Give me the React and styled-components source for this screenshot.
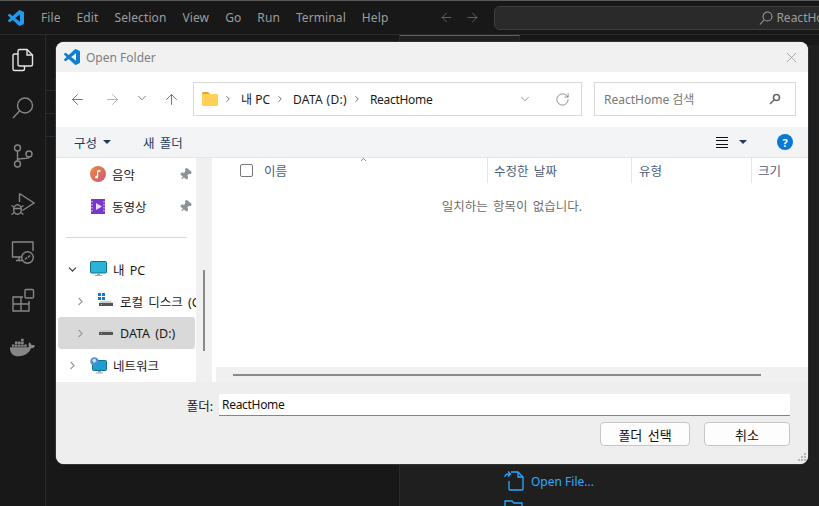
import React from 'react'
import styled, { createGlobalStyle } from 'styled-components'
import { FaDocker } from 'react-icons/fa'
import { ArrowLeft, ArrowRight, ArrowUp, ChevronDown, ChevronRight, RotateCw, X, Pin } from 'lucide-react'

const font = `"Noto Sans", "Noto Sans CJK KR", sans-serif`

const Global = createGlobalStyle`
  html, body { margin: 0; padding: 0; background: #1f1f1f; overflow: hidden; }
  * { box-sizing: border-box; }
  #root { width: 819px; height: 506px; }
  svg { flex: none; }
`

const Page = styled.div`
  position: relative;
  width: 819px;
  height: 506px;
  display: flex;
  flex-direction: column;
  overflow: hidden;
  font-family: ${font};
  background: #1f1f1f;
`

/* vscode behind */
const TitleBar = styled.div`
  height: 35px;
  flex: none;
  display: flex;
  align-items: center;
  background: #181818;
  border-top: 1px solid #5a5a5a;
  border-bottom: 1px solid #2b2b2b;
  color: #9d9d9d;
  font-size: 12px;
  padding-left: 8px;
`
const Menu = styled.div`
  display: flex;
  gap: 16px;
  margin-left: 17px;
  letter-spacing: 0.1px;
`
const NavArrows = styled.div`
  display: flex;
  gap: 11px;
  margin-left: 51px;
  color: #7a7a7a;
`
const CommandBox = styled.div`
  width: 340px;
  height: 24px;
  margin-left: 14px;
  flex: none;
  display: flex;
  align-items: center;
  gap: 2px;
  padding-left: 263px;
  background: #2a2a2a;
  border: 1px solid #3f3f3f;
  border-radius: 6px;
  white-space: nowrap;
  overflow: hidden;
`
const Body = styled.div`
  flex: 1;
  display: flex;
  min-height: 0;
`
const ActivityBar = styled.div`
  width: 46px;
  flex: none;
  display: flex;
  flex-direction: column;
  align-items: center;
  gap: 22px;
  padding-top: 12px;
  background: #181818;
  border-right: 1px solid #2b2b2b;
  color: #868686;
`
const SideBar = styled.div`
  width: 354px;
  flex: none;
  display: flex;
  flex-direction: column;
  padding-top: 33px;
  background: #181818;
  border-right: 1px solid #2b2b2b;
`
const SideHead = styled.div`
  height: 23px;
  padding: 4px 0 0 5px;
  color: #bbb;
  border-bottom: 1px solid #2b2b2b;
`
const Editor = styled.div`
  flex: 1;
  position: relative;
  display: flex;
  flex-direction: column;
`
const EditorTab = styled.div`
  width: 120px;
  height: 10px;
  background: #1f1f1f;
  border-top: 1px solid #0078d4;
  border-right: 1px solid #2b2b2b;
`
const EditorTabs = styled.div`
  height: 10px;
  background: #181818;
`
const StartLinks = styled.div`
  flex: 1;
  display: flex;
  flex-direction: column;
  justify-content: flex-end;
  gap: 3px;
  padding-left: 103px;
  margin-bottom: -14px;
  color: #2aaaff;
  font-size: 12px;
`
const StartLink = styled.div`
  display: flex;
  align-items: center;
  gap: 6px;
  height: 24px;
`

/* file dialog */
const Dialog = styled.div`
  position: absolute;
  left: 56px;
  top: 42px;
  width: 752px;
  height: 422px;
  display: flex;
  flex-direction: column;
  background: #eee;
  border-radius: 8px;
  overflow: hidden;
  color: #1a1a1a;
  font-size: 12.5px;
  word-spacing: 2px;
  box-shadow: 0 0 0 1px #333;
`
const DialogTitle = styled.div`
  height: 30px;
  flex: none;
  display: flex;
  align-items: center;
  gap: 6px;
  padding: 0 8px 0 8px;
  background: #f1f1f1;
  color: #7f7f7f;
  font-size: 12px;
  word-spacing: 0;
`
const CloseBtn = styled.div`
  margin-left: auto;
  display: flex;
  color: #8c8c8c;
`
const NavRow = styled.div`
  height: 55px;
  flex: none;
  display: flex;
  align-items: center;
  background: #fff;
  padding-bottom: 1px;
`
const NavBtn = styled.div`
  width: ${p => p.$w}px;
  display: flex;
  justify-content: center;
  color: ${p => (p.$off ? '#a8a8a8' : '#5f5f5f')};
`
const NavIcons = styled.div`
  display: flex;
  width: 137px;
  padding-left: 4px;
`
const AddressBox = styled.div`
  width: 389px;
  height: 34px;
  flex: none;
  display: flex;
  align-items: center;
  padding: 0 11px 0 8px;
  border: 1px solid #d9d9d9;
  color: #1a1a1a;
  font-size: 12px;
  word-spacing: 0;
`
const Crumb = styled.span`
  letter-spacing: ${p => p.$track || 0}px;
  white-space: nowrap;
`
const Sep = styled(ChevronRight)`
  color: #555;
  margin: 0 8px 0 5px;
  flex: none;
`
const AddrTools = styled.div`
  margin-left: auto;
  display: flex;
  align-items: center;
  gap: 23px;
  color: #6c6c6c;
`
const SearchBox = styled.div`
  width: 202px;
  height: 34px;
  margin-left: 12px;
  flex: none;
  display: flex;
  align-items: center;
  justify-content: space-between;
  padding: 0 14px 0 9px;
  border: 1px solid #d9d9d9;
  color: #777;
  font-size: 12px;
  word-spacing: 0;
`
const Toolbar = styled.div`
  height: 31px;
  flex: none;
  display: flex;
  align-items: center;
  padding: 0 15px 0 18px;
  background: #f3f4f6;
  border-bottom: 1px solid #e6e6e6;
  color: #1f3a5c;
`
const Caret = styled.span`
  display: inline-block;
  width: 0;
  height: 0;
  margin-left: ${p => p.$gap}px;
  border-left: 4px solid transparent;
  border-right: 4px solid transparent;
  border-top: 4px solid #1f3a5c;
`
const NewFolder = styled.span`
  margin-left: 32px;
`
const ToolRight = styled.div`
  margin-left: auto;
  display: flex;
  align-items: center;
`
const Lines = styled.div`
  width: 12px;
  height: 11px;
  border-top: 1px solid #111;
  border-bottom: 1px solid #111;
  position: relative;
  &::before, &::after {
    content: '';
    position: absolute;
    left: 0;
    right: 0;
    height: 1px;
    background: #111;
  }
  &::before { top: 2px; }
  &::after { top: 6px; }
`
const Help = styled.div`
  width: 16px;
  height: 16px;
  margin-left: 30px;
  border-radius: 50%;
  background: #0a78d6;
  color: #fff;
  font-size: 11px;
  font-weight: 700;
  display: flex;
  align-items: center;
  justify-content: center;
`
const Browser = styled.div`
  height: 224px;
  flex: none;
  display: flex;
  background: #fff;
`
const NavPane = styled.div`
  width: 140px;
  flex: none;
  overflow: hidden;
`
const Track = styled.div`
  width: 16px;
  flex: none;
  background: #f0f0f0;
  position: relative;
  margin-right: 4px;
`
const Thumb = styled.div`
  position: absolute;
  left: 7px;
  top: 112px;
  width: 2px;
  height: 81px;
  background: #8a8a8a;
`
const TreeRow = styled.div`
  height: 32px;
  margin: 0 ${p => (p.$sel ? 1 : 0)}px 0 ${p => (p.$sel ? 2 : 0)}px;
  display: flex;
  align-items: center;
  padding-left: ${p => p.$indent - (p.$sel ? 2 : 0)}px;
  background: ${p => (p.$sel ? '#d9d9d9' : 'transparent')};
  border-radius: 3px;
  white-space: nowrap;
  color: #1a1a1a;
`
const TreeChev = styled.div`
  width: 16px;
  margin-right: 10px;
  flex: none;
  display: flex;
  justify-content: center;
  color: ${p => (p.$open ? '#333' : '#999')};
`
const PinSlot = styled.div`
  position: absolute;
  left: 123px;
  color: #8d9299;
  display: flex;
  transform: rotate(40deg);
`
const QuickRow = styled(TreeRow)`
  position: relative;
`
const Label = styled.span`
  margin-left: 6px;
`
const Divider = styled.div`
  height: 1px;
  margin: 15px 9px 15px 10px;
  background: #d8d8d8;
`
const FilePane = styled.div`
  flex: 1;
  min-width: 0;
  display: flex;
  flex-direction: column;
`
const ColHead = styled.div`
  height: 25px;
  flex: none;
  display: flex;
  color: #4c607a;
  position: relative;
`
const Col = styled.div`
  width: ${p => p.$w}px;
  flex: none;
  display: flex;
  align-items: center;
  gap: 11px;
  padding: 0 0 1px ${p => p.$pad}px;
  border-right: ${p => (p.$line ? '1px solid #e5e5e5' : 'none')};
`
const Check = styled.div`
  width: 13px;
  height: 13px;
  border: 1px solid #767676;
  border-radius: 2px;
  background: #fff;
`
const SortMark = styled.div`
  position: absolute;
  left: 143px;
  top: -3px;
  color: #555;
  display: flex;
  transform: rotate(180deg);
`
const Empty = styled.div`
  flex: 1;
  text-align: center;
  padding-top: 13px;
  color: #6d6d6d;
`
const HScroll = styled.div`
  height: 15px;
  flex: none;
  background: #f0f0f0;
  display: flex;
  align-items: center;
  padding-left: 17px;
`
const HThumb = styled.div`
  width: 528px;
  height: 2px;
  background: #8a8a8a;
`
const Footer = styled.div`
  flex: 1;
  position: relative;
  display: flex;
  flex-direction: column;
  padding: 12px 18px 0 0;
  background: #eee;
`
const NameRow = styled.div`
  display: flex;
  justify-content: flex-end;
  align-items: center;
  gap: 6px;
`
const NameInput = styled.div`
  width: 571px;
  height: 22px;
  display: flex;
  align-items: center;
  padding-left: 3px;
  background: #fff;
  border-bottom: 1px solid #858585;
  color: #111;
  font-size: 12px;
  letter-spacing: -0.3px;
`
const Buttons = styled.div`
  display: flex;
  justify-content: flex-end;
  gap: 14px;
  margin-top: 6px;
`
const Btn = styled.div`
  width: ${p => p.$w}px;
  height: 24px;
  display: flex;
  align-items: center;
  justify-content: center;
  background: #fdfdfd;
  border: 1px solid #c6c6c6;
  border-radius: 4px;
  color: #111;
  font-size: 13px;
`
const Grip = styled.svg`
  position: absolute;
  right: 1px;
  bottom: 2px;
`

const VsCodeLogo = ({ color }) => (
  <svg width="16" height="16" viewBox="0 0 24 24" fill={color}>
    <path d="M23.15 2.587L18.21.21a1.494 1.494 0 0 0-1.705.29l-9.46 8.63-4.12-3.128a.999.999 0 0 0-1.276.057L.327 7.261A1 1 0 0 0 .326 8.74L3.899 12 .326 15.26a1 1 0 0 0 .001 1.479L1.65 17.94a.999.999 0 0 0 1.276.057l4.12-3.128 9.46 8.63a1.492 1.492 0 0 0 1.704.29l4.942-2.377A1.5 1.5 0 0 0 24 20.06V3.939a1.5 1.5 0 0 0-.85-1.352zm-5.146 14.861L10.826 12l7.178-5.448v10.896z" />
  </svg>
)
const FilesIcon = () => (
  <svg width="26" height="26" viewBox="0 0 26 26" fill="none" stroke="#e4e4e4" strokeWidth="1.4">
    <path d="M8 7H4.5A1.5 1.5 0 0 0 3 8.500V22A1.500 1.500 0 0 0 4.500 23.500H13A1.500 1.500 0 0 0 14.500 22V19" />
    <path d="M9.500 2.500H17L22.500 8V17.500A1.500 1.500 0 0 1 21 19H9.500A1.500 1.500 0 0 1 8 17.500V4A1.500 1.500 0 0 1 9.500 2.500Z" />
    <path d="M17 2.500V8H22.500" />
  </svg>
)
const SearchIcon = () => (
  <svg width="26" height="26" viewBox="0 0 26 26" fill="none" stroke="#868686" strokeWidth="1.4">
    <circle cx="15" cy="10.500" r="7.500" />
    <path d="M9.500 16L3 23" />
  </svg>
)
const BranchIcon = () => (
  <svg width="26" height="26" viewBox="0 0 26 26" fill="none" stroke="#868686" strokeWidth="1.4">
    <circle cx="7.500" cy="5" r="3" />
    <circle cx="7.500" cy="21" r="3" />
    <circle cx="19" cy="11" r="3" />
    <path d="M7.500 8V18M7.500 17C9 14 19 17 19 14" />
  </svg>
)
const DebugIcon = () => (
  <svg width="26" height="26" viewBox="0 0 26 26" fill="none" stroke="#868686" strokeWidth="1.400">
    <path d="M9.500 2.500L24 12L12.500 19.500M9.500 2.500V11" />
    <ellipse cx="7.500" cy="18.500" rx="3.800" ry="4.800" />
    <path d="M3.700 17.500H11.300M1.500 14.500L4 16M13.500 14.500L11 16M1.500 23.500L4.500 21.500M13.500 23.500L10.500 21.500" />
  </svg>
)
const RemoteIcon = () => (
  <svg width="26" height="26" viewBox="0 0 26 26" fill="none" stroke="#868686" strokeWidth="1.400">
    <path d="M12 18H2.500V3H23V12" />
    <path d="M6 21.500H12M9 18V21.500" />
    <circle cx="17.500" cy="18.500" r="5.800" />
    <path d="M15 20.500L17 18.500M18 18.500L20 16.500" />
  </svg>
)
const ExtIcon = () => (
  <svg width="26" height="26" viewBox="0 0 26 26" fill="none" stroke="#868686" strokeWidth="1.400">
    <path d="M3 10H11V24H3ZM3 17H19V24H11" />
    <rect x="15" y="2.500" width="8.500" height="8.500" rx="1" />
    <path d="M11 10H13M19 14V17" />
  </svg>
)
const FolderIcon = () => (
  <svg width="16" height="14" viewBox="0 0 16 14">
    <path d="M0 1.500A1.500 1.500 0 0 1 1.500 0H6L8 2H0Z" fill="#e8a90e" />
    <rect x="0" y="2" width="16" height="12" rx="1" fill="#ffcf57" />
  </svg>
)
const MagnifierIcon = () => (
  <svg width="12" height="12" viewBox="0 0 12 12" fill="none" stroke="#666" strokeWidth="1.600">
    <circle cx="7.500" cy="4.500" r="3" />
    <path d="M5 7L1 11" />
  </svg>
)
const MusicIcon = () => (
  <svg width="16" height="16" viewBox="0 0 16 16">
    <defs>
      <linearGradient id="mus" x1="0" y1="0" x2="1" y2="1">
        <stop offset="0" stopColor="#f08a3c" />
        <stop offset="1" stopColor="#c9587c" />
      </linearGradient>
    </defs>
    <circle cx="8" cy="8" r="8" fill="url(#mus)" />
    <path d="M7 11V4.500L10.500 4V5.500L8.200 6V11Z" fill="#fff" />
    <circle cx="6.500" cy="11" r="1.500" fill="#fff" />
  </svg>
)
const VideoIcon = () => (
  <svg width="16" height="16" viewBox="0 0 16 16">
    <rect x="1" y="1" width="14" height="15" fill="#7a35c9" />
    <path d="M6 5L12 8.500L6 12Z" fill="#e6dcff" />
    <path d="M2 3V14M14 3V14" stroke="#d8c8f5" strokeWidth="1.200" strokeDasharray="1.500 1.500" />
  </svg>
)
const MonitorIcon = () => (
  <svg width="17" height="16" viewBox="0 0 17 16">
    <rect x="0.500" y="0.500" width="16" height="11.500" rx="1" fill="#2bb3d6" stroke="#12718f" />
    <rect x="7" y="12" width="3" height="2" fill="#9aa6ad" />
    <rect x="5" y="14" width="7" height="1" fill="#9aa6ad" />
  </svg>
)
const LocalDiskIcon = () => (
  <svg width="16" height="16" viewBox="0 0 16 16">
    <g fill="#1278d8">
      <rect x="0" y="0" width="3" height="3" />
      <rect x="4" y="0" width="3" height="3" />
      <rect x="0" y="4" width="3" height="3" />
      <rect x="4" y="4" width="3" height="3" />
    </g>
    <path d="M3 8H13L15 10H1Z" fill="#c9cdd1" />
    <rect x="1" y="10" width="14" height="3" fill="#555" />
    <rect x="3" y="11" width="1" height="1" fill="#5fe05f" />
  </svg>
)
const DiskIcon = () => (
  <svg width="16" height="16" viewBox="0 0 16 16">
    <path d="M3 5H13L15 7H1Z" fill="#c9cdd1" />
    <rect x="1" y="7" width="14" height="3" fill="#555" />
    <rect x="3" y="8" width="1" height="1" fill="#5fe05f" />
  </svg>
)
const NetworkIcon = () => (
  <svg width="17" height="17" viewBox="0 0 17 17">
    <rect x="2.500" y="3.500" width="14" height="10" rx="1" fill="#1f9dd0" stroke="#12718f" />
    <rect x="8" y="14" width="3" height="1.500" fill="#9aa6ad" />
    <rect x="6" y="15.500" width="7" height="1" fill="#9aa6ad" />
    <circle cx="4.500" cy="4.500" r="4.200" fill="#4a8fd0" />
    <path d="M2 3L5 1.500L6.500 4L4 6Z" fill="#cfe4f5" />
  </svg>
)
const OpenFileIcon = () => (
  <svg width="22" height="22" viewBox="0 0 22 22" fill="none" stroke="#2aaaff" strokeWidth="1.300">
    <path d="M8 2H15L20 7V19A1 1 0 0 1 19 20H7A1 1 0 0 1 6 19V11" />
    <path d="M15 2V7H20" />
    <path d="M2 7C2 4 4 4 7 4M5 1.500L7.500 4L5 6.500" />
  </svg>
)
const OpenFolderIcon = () => (
  <svg width="22" height="22" viewBox="0 0 22 22" fill="none" stroke="#2aaaff" strokeWidth="1.300">
    <path d="M2 18V4H9L11 6H19V18Z" />
  </svg>
)

const menus = ['File', 'Edit', 'Selection', 'View', 'Go', 'Run', 'Terminal', 'Help']

export default function App() {
  return (
    <Page>
      <Global />
      <TitleBar>
        <VsCodeLogo color="#1f9cf0" />
        <Menu>
          {menus.map(m => <span key={m}>{m}</span>)}
        </Menu>
        <NavArrows>
          <ArrowLeft size={15} strokeWidth={1.2} />
          <ArrowRight size={15} strokeWidth={1.2} />
        </NavArrows>
        <CommandBox>
          <svg width="16" height="16" viewBox="0 0 16 16" fill="none" stroke="#9d9d9d" strokeWidth="1.100">
            <circle cx="9.500" cy="6.500" r="4.500" />
            <path d="M6 10L2 14.500" />
          </svg>
          <span>ReactHome</span>
        </CommandBox>
      </TitleBar>
      <Body>
        <ActivityBar>
          <FilesIcon />
          <SearchIcon />
          <BranchIcon />
          <DebugIcon />
          <RemoteIcon />
          <ExtIcon />
          <FaDocker size={25} />
        </ActivityBar>
        <SideBar>
          <SideHead><ChevronRight size={12} /></SideHead>
          <SideHead><ChevronRight size={12} /></SideHead>
          <SideHead><ChevronRight size={12} /></SideHead>
        </SideBar>
        <Editor>
          <EditorTabs><EditorTab /></EditorTabs>
          <StartLinks>
            <StartLink><OpenFileIcon />Open File...</StartLink>
            <StartLink><OpenFolderIcon /></StartLink>
          </StartLinks>
        </Editor>
      </Body>

      <Dialog>
        <DialogTitle>
          <VsCodeLogo color="#0e7fd0" />
          Open Folder
          <CloseBtn><X size={17} strokeWidth={1} /></CloseBtn>
        </DialogTitle>
        <NavRow>
          <NavIcons>
            <NavBtn $w={34}><ArrowLeft size={17} strokeWidth={1.200} /></NavBtn>
            <NavBtn $w={36} $off><ArrowRight size={17} strokeWidth={1.200} /></NavBtn>
            <NavBtn $w={24}><ChevronDown size={14} strokeWidth={1.300} /></NavBtn>
            <NavBtn $w={34}><ArrowUp size={17} strokeWidth={1.200} /></NavBtn>
          </NavIcons>
          <AddressBox>
            <FolderIcon />
            <Sep size={10} strokeWidth={2} />
            <Crumb>내 PC</Crumb>
            <Sep size={10} strokeWidth={2} />
            <Crumb $track={0.3}>DATA (D:)</Crumb>
            <Sep size={10} strokeWidth={2} />
            <Crumb $track={-0.3}>ReactHome</Crumb>
            <AddrTools>
              <ChevronDown size={14} strokeWidth={1.200} />
              <RotateCw size={15} strokeWidth={1.200} />
            </AddrTools>
          </AddressBox>
          <SearchBox>
            <span>ReactHome 검색</span>
            <MagnifierIcon />
          </SearchBox>
        </NavRow>
        <Toolbar>
          구성
          <Caret $gap={6} />
          <NewFolder>새 폴더</NewFolder>
          <ToolRight>
            <Lines />
            <Caret $gap={11} />
            <Help>?</Help>
          </ToolRight>
        </Toolbar>
        <Browser>
          <NavPane>
            <QuickRow $indent={34}><MusicIcon /><Label>음악</Label><PinSlot><Pin size={13} fill="#8d9299" /></PinSlot></QuickRow>
            <QuickRow $indent={34}><VideoIcon /><Label>동영상</Label><PinSlot><Pin size={13} fill="#8d9299" /></PinSlot></QuickRow>
            <Divider />
            <TreeRow $indent={8}><TreeChev $open><ChevronDown size={13} strokeWidth={2} /></TreeChev><MonitorIcon /><Label>내 PC</Label></TreeRow>
            <TreeRow $indent={16}><TreeChev><ChevronRight size={13} strokeWidth={2} /></TreeChev><LocalDiskIcon /><Label>로컬 디스크 (C:)</Label></TreeRow>
            <TreeRow $indent={16} $sel><TreeChev><ChevronRight size={13} strokeWidth={2} /></TreeChev><DiskIcon /><Label>DATA (D:)</Label></TreeRow>
            <TreeRow $indent={8}><TreeChev><ChevronRight size={13} strokeWidth={2} /></TreeChev><NetworkIcon /><Label>네트워크</Label></TreeRow>
          </NavPane>
          <Track><Thumb /></Track>
          <FilePane>
            <ColHead>
              <SortMark><ChevronDown size={9} /></SortMark>
              <Col $w={272} $pad={24} $line><Check />이름</Col>
              <Col $w={144} $pad={6} $line>수정한 날짜</Col>
              <Col $w={120} $pad={7} $line>유형</Col>
              <Col $w={56} $pad={6}>크기</Col>
            </ColHead>
            <Empty>일치하는 항목이 없습니다.</Empty>
            <HScroll><HThumb /></HScroll>
          </FilePane>
        </Browser>
        <Footer>
          <NameRow>
            폴더:
            <NameInput>ReactHome</NameInput>
          </NameRow>
          <Buttons>
            <Btn $w={90}>폴더 선택</Btn>
            <Btn $w={86}>취소</Btn>
          </Buttons>
          <Grip width="10" height="10" viewBox="0 0 10 10" fill="#b5b5b5">
            <rect x="7" y="1" width="2" height="2" />
            <rect x="4" y="4" width="2" height="2" />
            <rect x="7" y="4" width="2" height="2" />
            <rect x="1" y="7" width="2" height="2" />
            <rect x="4" y="7" width="2" height="2" />
            <rect x="7" y="7" width="2" height="2" />
          </Grip>
        </Footer>
      </Dialog>
    </Page>
  )
}
